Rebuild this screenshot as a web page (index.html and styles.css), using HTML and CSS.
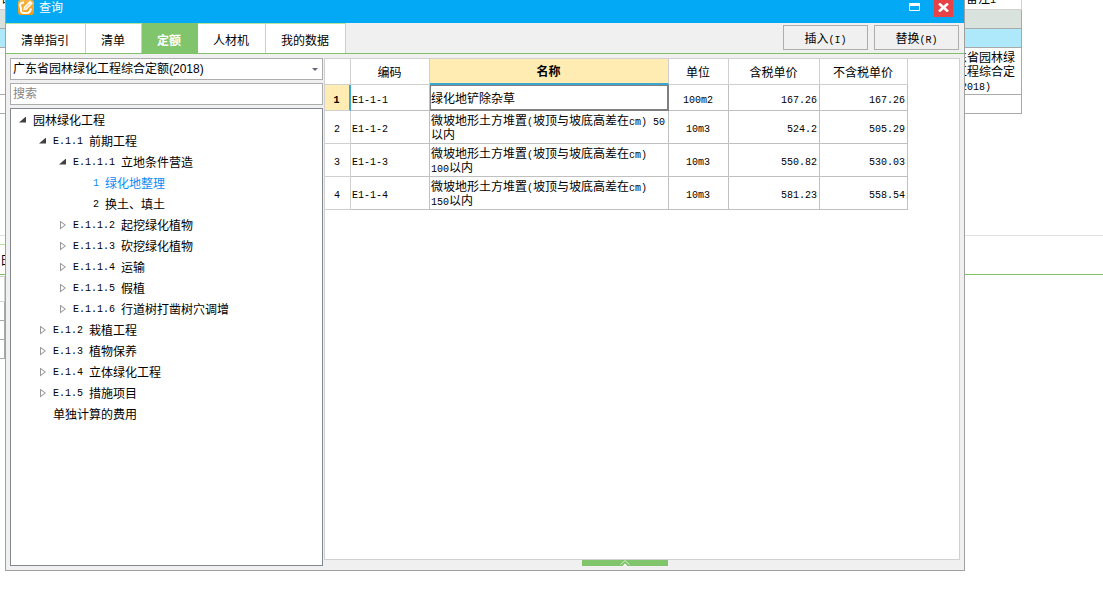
FILE: index.html
```html
<!DOCTYPE html>
<html lang="zh-CN">
<head>
<meta charset="utf-8">
<title>查询</title>
<link rel="stylesheet" href="styles.css">
</head>
<body>
<main class="workspace">
  <table class="sheet">
    <tr class="sheet-head"><td>名</td><td class="remark">备注<span class="n">1</span></td></tr>
    <tr class="sheet-group"><td></td><td></td></tr>
    <tr class="sheet-current"><td></td><td></td></tr>
    <tr class="sheet-text"><td></td><td>广东省园林绿化工程综合定额<span class="n">(2018)</span></td></tr>
    <tr class="sheet-row"><td></td><td></td></tr>
  </table>
  <section class="detail">
    <div class="detail-tabs"><span class="detail-tab">日</span></div>
    <div class="detail-grid"><i></i><i></i><i></i><i></i></div>
  </section>
</main>

<section class="dialog" role="dialog" aria-labelledby="dialog-title">
  <header class="titlebar">
    <svg class="logo" viewBox="0 0 16 16" aria-hidden="true">
      <defs><linearGradient id="g" x1="0" y1="0" x2="0" y2="1"><stop offset="0" stop-color="#f9b64a"/><stop offset="1" stop-color="#f39a10"/></linearGradient></defs>
      <rect width="16" height="15" rx="3" fill="url(#g)"/>
      <path d="M6 2.500C3.500 2.500 2 4 2 5.500C2 7 3 7 3 8.500V10.500C3 12.500 4 13 6 13H8.500C11 13 12.500 11.500 13 8.500" fill="none" stroke="#fff" stroke-width="2"/>
      <path d="M5 10.500L5.800 7L12 .8L14.800 3.200L8.500 9.800Z" fill="#fff"/>
      <path d="M7 8.500L12 3.500" stroke="#f5a832" stroke-width=".8"/>
    </svg>
    <h1 id="dialog-title">查询</h1>
    <button class="win-max" aria-label="最大化"><svg viewBox="0 0 11 8"><path d="M.5 1.500H10.500V7.500H.5Z" fill="none" stroke="#fff"/><path d="M0 0H11V3H0Z" fill="#fff"/></svg></button>
    <button class="win-close" aria-label="关闭"><svg viewBox="0 0 11 9"><path d="M1 .5L10 8.500M10 .5L1 8.500" stroke="#fff" stroke-width="2.600"/></svg></button>
  </header>
  <div class="toolbar">
    <nav class="tabs">
      <button class="tab">清单指引</button>
      <button class="tab">清单</button>
      <button class="tab active">定额</button>
      <button class="tab">人材机</button>
      <button class="tab">我的数据</button>
    </nav>
    <div class="actions">
      <button class="action">插入<span class="n">(I)</span></button>
      <button class="action">替换<span class="n">(R)</span></button>
    </div>
  </div>
  <div class="body">
    <aside class="side">
      <div class="combo">
        <select aria-label="定额库"><option>广东省园林绿化工程综合定额(2018)</option></select>
        <svg viewBox="0 0 6 3" aria-hidden="true"><path d="M0 0H6L3 3Z" fill="#66667a"/></svg>
      </div>
      <input class="search" type="text" placeholder="搜索" aria-label="搜索">
      <div class="tree">
        <ul>
          <li><div class="node"><button class="toggle open" aria-label="收起"></button>园林绿化工程</div>
            <ul>
              <li><div class="node"><button class="toggle open" aria-label="收起"></button><span class="n">E.1.1 </span>前期工程</div>
                <ul>
                  <li><div class="node"><button class="toggle open" aria-label="收起"></button><span class="n">E.1.1.1 </span>立地条件营造</div>
                    <ul>
                      <li><div class="node leaf current"><span class="n">1 </span>绿化地整理</div></li>
                      <li><div class="node leaf"><span class="n">2 </span>换土、填土</div></li>
                    </ul>
                  </li>
                  <li><div class="node"><button class="toggle" aria-label="展开"></button><span class="n">E.1.1.2 </span>起挖绿化植物</div></li>
                  <li><div class="node"><button class="toggle" aria-label="展开"></button><span class="n">E.1.1.3 </span>砍挖绿化植物</div></li>
                  <li><div class="node"><button class="toggle" aria-label="展开"></button><span class="n">E.1.1.4 </span>运输</div></li>
                  <li><div class="node"><button class="toggle" aria-label="展开"></button><span class="n">E.1.1.5 </span>假植</div></li>
                  <li><div class="node"><button class="toggle" aria-label="展开"></button><span class="n">E.1.1.6 </span>行道树打凿树穴调增</div></li>
                </ul>
              </li>
              <li><div class="node"><button class="toggle" aria-label="展开"></button><span class="n">E.1.2 </span>栽植工程</div></li>
              <li><div class="node"><button class="toggle" aria-label="展开"></button><span class="n">E.1.3 </span>植物保养</div></li>
              <li><div class="node"><button class="toggle" aria-label="展开"></button><span class="n">E.1.4 </span>立体绿化工程</div></li>
              <li><div class="node"><button class="toggle" aria-label="展开"></button><span class="n">E.1.5 </span>措施项目</div></li>
              <li><div class="node leaf">单独计算的费用</div></li>
            </ul>
          </li>
        </ul>
      </div>
    </aside>
    <div class="content">
      <div class="grid-panel">
        <table class="grid">
          <colgroup><col class="c-index"><col class="c-code"><col class="c-name"><col class="c-unit"><col class="c-tax"><col class="c-net"></colgroup>
          <thead>
            <tr><th></th><th>编码</th><th class="sorted">名称</th><th>单位</th><th>含税单价</th><th>不含税单价</th></tr>
          </thead>
          <tbody>
            <tr class="first"><th class="marked"><span class="n">1</span></th><td><span class="n">E1-1-1</span></td><td class="focus">绿化地铲除杂草</td><td class="unit"><span class="n">100m2</span></td><td class="num"><span class="n">167.26</span></td><td class="num"><span class="n">167.26</span></td></tr>
            <tr><th><span class="n">2</span></th><td><span class="n">E1-1-2</span></td><td>微坡地形土方堆置<span class="n">(</span>坡顶与坡底高差在<span class="n">cm) 50</span><br>以内</td><td class="unit"><span class="n">10m3</span></td><td class="num"><span class="n">524.2</span></td><td class="num"><span class="n">505.29</span></td></tr>
            <tr><th><span class="n">3</span></th><td><span class="n">E1-1-3</span></td><td>微坡地形土方堆置<span class="n">(</span>坡顶与坡底高差在<span class="n">cm)</span><br><span class="n">100</span>以内</td><td class="unit"><span class="n">10m3</span></td><td class="num"><span class="n">550.82</span></td><td class="num"><span class="n">530.03</span></td></tr>
            <tr><th><span class="n">4</span></th><td><span class="n">E1-1-4</span></td><td>微坡地形土方堆置<span class="n">(</span>坡顶与坡底高差在<span class="n">cm)</span><br><span class="n">150</span>以内</td><td class="unit"><span class="n">10m3</span></td><td class="num"><span class="n">581.23</span></td><td class="num"><span class="n">558.54</span></td></tr>
          </tbody>
        </table>
      </div>
      <button class="expander" aria-label="展开详情"><svg viewBox="0 0 10 6"><path d="M.5 4.500L5 .5L9.500 4.500" fill="none" stroke="#d3ecc9"/><path d="M2.500 6L5 3.500L7.500 6Z" fill="#fff"/></svg></button>
    </div>
  </div>
</section>
</body>
</html>
```
FILE: styles.css
```css
* { box-sizing: border-box; }
html, body { height: 100%; }
body {
  margin: 0;
  overflow: hidden;
  background: #fff;
  color: #000;
  font: 12px/14px "Liberation Sans", "Noto Sans CJK SC", sans-serif;
}
button, input, select { font: inherit; color: inherit; margin: 0; padding: 0; border: 0; border-radius: 0; background: none; }
svg { display: block; }
ul { margin: 0; padding: 0; list-style: none; }
.n { font-family: "Liberation Mono", monospace; font-size: 10px; line-height: 10px; white-space: pre; }

/* Main window behind the dialog */
.workspace { height: 100%; overflow: hidden; }
.sheet {
  width: calc(100% - 81px);
  margin-top: -16px;
  border-collapse: separate;
  border-spacing: 0;
  table-layout: fixed;
}
.sheet td { padding: 0; border: 0 solid #a9a9a9; border-width: 0 1px 1px 0; }
.sheet td:last-child { width: 81px; padding: 0 2px; }
.sheet .sheet-head td { height: 26px; padding-top: 5px; border-color: #d0d0d0; }
.sheet .remark { text-align: center; }
.sheet-group td { height: 19px; background: #dae2de; }
.sheet-current td { height: 19px; background: #ade8fb; }
.sheet .sheet-text td { height: 47px; padding-top: 2px; }
.sheet-row td { height: 19px; }
.detail { margin-top: 121px; border-top: 1px solid #e0e0e0; }
.detail-tabs { height: 39px; padding-top: 8px; border-bottom: 1px solid #7fc269; }
.detail-tab { display: block; width: 16px; padding-top: 9px; border-top: 1px solid #b4e49c; }
.detail-grid { width: 80px; margin-top: 1px; border-top: 1px solid #d0d0d0; }
.detail-grid i { display: block; height: 19px; border-bottom: 1px solid #a9a9a9; }
.detail-grid i::before { content: ""; display: block; width: 4px; height: 100%; border-right: 1px solid #a9a9a9; }
.detail-grid i:first-child { height: 25px; border-color: #d0d0d0; }
.detail-grid i:first-child::before { border-color: #d0d0d0; }

/* Dialog window */
.dialog {
  position: absolute;
  inset: 0 138px 18px 5px;
  display: flex;
  flex-direction: column;
  border: 1px solid #a0a0a0;
  border-top: 0;
  background: #f0f0f0;
}
.titlebar { display: flex; align-items: flex-start; height: 23px; padding: 0 11px 0 12px; background: #03a9f4; color: #fff; }
.logo { width: 16px; height: 16px; margin-right: 5px; }
.titlebar h1 { flex: 1; margin: 0; padding-top: 1px; font-size: 12px; font-weight: 400; }
.win-max { margin: 3px 14px 0 0; }
.win-max svg { width: 11px; height: 8px; }
.win-close { display: grid; place-items: center; width: 19px; height: 17px; background: #e64346; }
.win-close svg { width: 11px; height: 9px; margin-bottom: 3px; }

.toolbar { display: flex; justify-content: space-between; align-items: center; height: 31px; padding-right: 5px; border-bottom: 1px solid #7fc269; }
.tabs { display: flex; align-self: stretch; }
.tab { padding: 4px 16px 0 15px; border: 1px solid #b4e49c; border-width: 1px 1px 0 0; background: #fff; }
.tab:first-child { padding-right: 16px; }
.tab.active { border-color: #80c46c; background: #80c46c; color: #fff; font-weight: 700; }
.actions { display: flex; gap: 6px; padding-bottom: 3px; }
.action { width: 85px; height: 25px; margin-top: 2px; padding-top: 3px; border: 1px solid #adadad; background: #f0f0f0; }

.body { flex: 1; min-height: 0; display: flex; gap: 1px; padding: 4px; }
.side { width: 313px; display: flex; flex-direction: column; }
.combo { display: grid; align-items: center; margin-bottom: 3px; }
.combo > * { grid-area: 1 / 1; }
.combo select { appearance: none; width: 100%; height: 22px; padding: 0 2px; border: 1px solid #adadad; background: #fff; }
.combo svg { width: 6px; height: 3px; justify-self: end; margin: 0 5px 0 0; pointer-events: none; }
.search { height: 22px; margin-bottom: 3px; padding: 0 2px; border: 1px solid #adadad; background: #fff; }
.search::placeholder { color: #858585; opacity: 1; }
.tree { flex: 1; padding: 1px 7px; border: 1px solid #828790; background: #fff; }
.tree ul ul { padding-left: 20px; }
.node { display: flex; align-items: center; height: 21px; white-space: pre; }
.node.leaf { padding-left: 15px; }
.node.current { color: #0a8cf5; }
.toggle { display: grid; align-items: center; width: 15px; height: 21px; }
.toggle::before { content: ""; display: block; width: 6px; height: 9px; margin: 0 0 1px 2px; background: #999; clip-path: path(evenodd, "M0 0L6 4.5L0 9ZM1 2L1 7L4.5 4.5Z"); }
.toggle.open::before { width: 7px; height: 6px; margin: 0 0 2px 1px; background: #404040; clip-path: polygon(100% 0, 100% 100%, 0 100%); }

.content { flex: 1; min-width: 0; display: flex; flex-direction: column; align-items: center; }
.grid-panel { flex: 1; align-self: stretch; border: 1px solid #d0d0d0; background: #fff; }
.grid { width: 583px; table-layout: fixed; border-collapse: separate; border-spacing: 0; }
.c-index { width: 26px; }
.c-code { width: 79px; }
.c-name { width: 239px; }
.c-unit { width: 60px; }
.c-tax { width: 91px; }
.c-net { width: 88px; }
.grid th, .grid td { height: 33px; padding: 2px 2px 0 1px; border: 0 solid #c0c0c0; border-width: 0 1px 1px 0; text-align: left; font-weight: 400; white-space: nowrap; }
.grid th { text-align: center; border-color: #d0d0d0; }
.grid thead th, .grid .first > * { height: 26px; }
.grid thead .sorted { border-bottom: 2px solid #3ba6d0; background: #ffecb3; font-weight: 700; }
.grid .marked { border-right: 2px solid #3ba6d0; background: #ffecb3; font-weight: 700; }
.grid .focus { border-color: #808080; box-shadow: inset 1px 1px #808080, inset -1px -1px #808080; }
.grid .unit { text-align: center; }
.grid .num { text-align: right; }
.expander { display: grid; justify-items: center; width: 86px; height: 6px; margin-left: -35px; background: #80c46c; }
.expander svg { width: 10px; height: 6px; }
```
